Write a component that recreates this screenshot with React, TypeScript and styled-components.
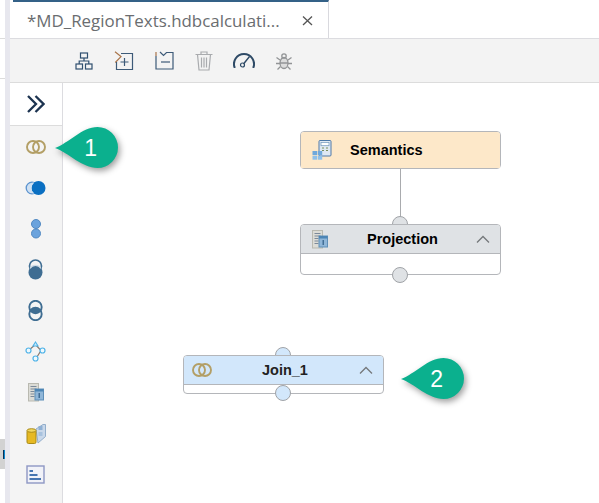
import React from 'react'
import styled, { createGlobalStyle } from 'styled-components'

const GlobalStyle = createGlobalStyle`
  html, body {
    margin: 0;
    padding: 0;
    background: #fff;
    overflow: hidden;
  }
  * {
    box-sizing: border-box;
  }
`

const Page = styled.div`
  display: flex;
  width: 599px;
  height: 503px;
  font-family: 'Liberation Sans', Arial, sans-serif;
`

const Gutter = styled.div`
  width: 5px;
  flex: none;
  display: flex;
  flex-direction: column;
`

const GutterCell = styled.div<{ $h: number }>`
  height: ${({ $h }) => $h}px;
  border-bottom: 1px solid #dcdcdc;
`

const GutterChip = styled.div`
  height: 30px;
  margin-top: 360px;
  background: #d2d2d2;
  display: flex;
  align-items: center;
  justify-content: flex-end;
`

const ChipGlyph = styled.span`
  width: 2px;
  height: 9px;
  background: #0a2f55;
  border-right: 1px solid #0a8ad0;
`

const Rail = styled.div`
  width: 5px;
  flex: none;
  background: #e7e7ee;
`

const Main = styled.div`
  flex: 1;
  display: flex;
  flex-direction: column;
  min-width: 0;
`

const TabBar = styled.div`
  height: 38px;
  flex: none;
  padding-left: 3px;
  display: flex;
  background: #fff;
`

const Tab = styled.div`
  width: 316px;
  border-top: 2px solid #346187;
  border-right: 1px solid #d9d9de;
  display: flex;
  align-items: center;
  padding: 0 15px 0 14px;
  justify-content: space-between;
`

const TabTitle = styled.span`
  font-family: 'Open Sans', sans-serif;
  font-size: 16.9px;
  color: #6a6d70;
  white-space: nowrap;
`

const Toolbar = styled.div`
  height: 45px;
  flex: none;
  background: #f3f3f3;
  border-top: 1px solid #dcdce0;
  border-bottom: 1px solid #dcdcdc;
  padding-left: 54px;
  display: flex;
  align-items: center;
`

const ToolButton = styled.span`
  width: 40px;
  display: flex;
  justify-content: center;
  align-items: center;
`

const Body = styled.div`
  flex: 1;
  display: flex;
  min-height: 0;
`

const Palette = styled.div`
  width: 53px;
  flex: none;
  background: #f4f4f4;
  border-right: 1px solid #dcdce0;
  display: flex;
  flex-direction: column;
`

const PaletteToggle = styled.div`
  height: 43px;
  flex: none;
  background: #fff;
  border-bottom: 1px solid #dcdcdc;
  display: flex;
  align-items: center;
  justify-content: center;
`

const PaletteItem = styled.div`
  height: 41px;
  flex: none;
  display: flex;
  align-items: center;
  justify-content: center;
  padding-right: 1px;
`

const Canvas = styled.div`
  flex: 1;
  position: relative;
  background: #fff;
`

const Node = styled.div<{ $x: number; $y: number; $h: number }>`
  position: absolute;
  left: ${({ $x }) => $x}px;
  top: ${({ $y }) => $y}px;
  width: 201px;
  height: ${({ $h }) => $h}px;
  border: 1px solid #b4b6ba;
  border-radius: 4px;
  background: #fff;
`

const NodeHeader = styled.div<{ $bg: string; $h: number; $rule?: boolean; $pad?: number }>`
  height: ${({ $h }) => $h}px;
  background: ${({ $bg }) => $bg};
  border-radius: 3px 3px 0 0;
  border-bottom: ${({ $rule }) => ($rule ? '1px solid #b4b6ba' : 'none')};
  display: flex;
  align-items: center;
  position: relative;
  padding: 0 10px 0 ${({ $pad }) => $pad ?? 11}px;
`

const NodeLabel = styled.span<{ $left: number; $color?: string }>`
  position: absolute;
  left: ${({ $left }) => $left}px;
  font-size: 14.5px;
  font-weight: 700;
  color: ${({ $color }) => $color ?? '#000'};
`

const Chevron = styled.span`
  margin-left: auto;
  display: flex;
`

const Port = styled.span<{ $x: number; $y: number; $bg: string }>`
  position: absolute;
  left: ${({ $x }) => $x - 8}px;
  top: ${({ $y }) => $y - 8}px;
  width: 16px;
  height: 16px;
  border-radius: 50%;
  border: 1px solid #a0a3a7;
  background: ${({ $bg }) => $bg};
`

const Link = styled.span`
  position: absolute;
  left: 337px;
  top: 86px;
  width: 1px;
  height: 50px;
  background: #a9abae;
`

const CalloutWrap = styled.div<{ $x: number; $y: number; $w: number }>`
  position: absolute;
  left: ${({ $x }) => $x}px;
  top: ${({ $y }) => $y}px;
  width: ${({ $w }) => $w}px;
  height: 41px;
`

const CalloutShape = styled.svg`
  display: block;
  overflow: visible;
  filter: drop-shadow(2px 3px 3px rgba(0, 0, 0, 0.38));
`

const CalloutNumber = styled.span`
  position: absolute;
  right: 21px;
  top: 8px;
  font-size: 23px;
  line-height: 26px;
  color: #fff;
`

const Rings = () => (
  <svg width="20" height="16" viewBox="0 0 20 16" fill="none">
    <circle cx="7" cy="8" r="6" stroke="#b39f66" strokeWidth="1.9" />
    <circle cx="13" cy="8" r="6" stroke="#b39f66" strokeWidth="1.9" />
  </svg>
)

const ProjectionIcon = () => (
  <svg width="16" height="19" viewBox="0 0 16 19">
    <rect x="0.5" y="0.5" width="10" height="17.5" fill="#dcdcd6" stroke="#b9b9b0" />
    <path d="M2.500 3.500h6M2.500 6h6M2.500 8.500h4M2.500 11h4M2.500 13.500h4" stroke="#7c8a9a" strokeWidth="1" />
    <rect x="7" y="6" width="8.500" height="11" fill="#8fb6d8" stroke="#5f8fb8" />
    <rect x="7" y="6" width="8.500" height="2.500" fill="#4c85b5" />
    <path d="M11.200 10v5" stroke="#2f5d85" strokeWidth="1.200" />
  </svg>
)

const SemanticsIcon = () => (
  <svg width="20" height="20" viewBox="0 0 20 20">
    <rect x="7" y="0.5" width="12" height="15.500" rx="1" fill="#dfe8f2" stroke="#4e79a8" />
    <rect x="9" y="2.500" width="8" height="3.200" fill="#fff" stroke="#6f94bb" strokeWidth="0.7" />
    <path d="M10 8h2M14 8h2M10 10.500h2M14 10.500h2" stroke="#7a8f5d" strokeWidth="1" />
    <rect x="0.5" y="11" width="4.500" height="4" fill="#6fa8dc" />
    <rect x="5.700" y="11" width="4.500" height="4" fill="#6fa8dc" />
    <rect x="0.5" y="15.700" width="4.500" height="4" fill="#8fc0ea" />
    <rect x="5.700" y="15.700" width="4.500" height="4" fill="#8fc0ea" />
  </svg>
)

const UpChevron = () => (
  <svg width="14" height="9" viewBox="0 0 14 9" fill="none">
    <path d="M1 7.500 7 1.500l6 6" stroke="#75787b" strokeWidth="1.300" />
  </svg>
)

const toolIcons = [
  <svg key="layout" width="18" height="18" viewBox="0 0 18 18" fill="none" stroke="#2f4f6f" strokeWidth="1.200">
    <rect x="5.500" y="1" width="7" height="5" />
    <rect x="1" y="12" width="6.500" height="5" />
    <rect x="10.500" y="12" width="6.500" height="5" />
    <path d="M9 6v3M4.200 12V9h9.600v3" />
  </svg>,
  <svg key="expand" width="20" height="20" viewBox="0 0 20 20" fill="none" stroke="#3d5a78" strokeWidth="1.200">
    <path d="M1 .7 7 5.600 1.300 11.500" stroke="#a9744a" />
    <path d="M7 2.500h11.500v16H2.500V11" />
    <path d="M10.500 7v8M6.500 11h8" />
  </svg>,
  <svg key="collapse" width="19" height="19" viewBox="0 0 19 19" fill="none" stroke="#3d5a78" strokeWidth="1.200">
    <path d="M1 5v13h17V1.500H11.500L8.500 4.500 5 1" />
    <path d="M6 11h9" />
    <path d="M1 1v4" stroke="#a9744a" />
  </svg>,
  <svg key="trash" width="18" height="20" viewBox="0 0 18 20" fill="none" stroke="#a9abae" strokeWidth="1.200">
    <path d="M.5 3.500h17M6 3.200V1h6v2.200" />
    <path d="M2.500 3.500 4 19h10l1.500-15.500" />
    <path d="M6.500 6.500v10M9 6.500v10M11.500 6.500v10" />
  </svg>,
  <svg key="gauge" width="22" height="15" viewBox="0 0 22 15" fill="none" stroke="#2e4a66" strokeWidth="2">
    <path d="M1.830 15A10 10 0 1 1 20.170 15" />
    <path d="M10.500 11 16.500 4.500" stroke="#f3f3f3" strokeWidth="3.500" />
    <path d="M10.500 11 16.500 3.500" strokeWidth="1.400" />
    <circle cx="9.500" cy="12" r="2" strokeWidth="1.200" />
  </svg>,
  <svg key="bug" width="18" height="18" viewBox="0 0 18 18" fill="none" stroke="#929496" strokeWidth="1.300">
    <ellipse cx="9" cy="11" rx="4" ry="5.500" fill="#dcdcdc" />
    <circle cx="9" cy="4" r="2.200" />
    <path d="M5 8 1.500 5.500M13 8l3.500-2.500M5 11.500H1M13 11.500h4M5.500 14.500l-3 3M12.500 14.500l3 3M5 11h8" />
  </svg>,
]

const paletteIcons = [
  <Rings key="join" />,
  <svg key="nonequi" width="21" height="16" viewBox="0 0 21 16" fill="none">
    <circle cx="7" cy="8" r="5.800" fill="#cfe1f3" stroke="#5b93cf" strokeWidth="1.300" />
    <circle cx="13.500" cy="8" r="7" fill="#0a6fc2" />
    <path d="M8.500 2.500a7 7 0 0 0 0 11" stroke="#cfe1f3" strokeWidth="1.200" />
  </svg>,
  <svg key="union" width="12" height="20" viewBox="0 0 12 20">
    <circle cx="6" cy="5" r="4.500" fill="#6ba3dd" stroke="#5289c2" />
    <circle cx="6" cy="14.500" r="4.500" fill="#6ba3dd" stroke="#5289c2" />
  </svg>,
  <svg key="intersect" width="17" height="21" viewBox="0 0 17 21" fill="none">
    <circle cx="8.500" cy="7" r="6" stroke="#3f6d92" strokeWidth="1.700" />
    <circle cx="8.500" cy="13.500" r="7" fill="#3f6d92" />
    <path d="M3 9.500a6.500 6.500 0 0 1 11 0" stroke="#cfdbe6" strokeWidth="1.200" />
  </svg>,
  <svg key="minus" width="17" height="21" viewBox="0 0 17 21" fill="none">
    <circle cx="8.500" cy="7" r="6.200" stroke="#3f6d92" strokeWidth="1.900" />
    <circle cx="8.500" cy="14" r="6.200" stroke="#3f6d92" strokeWidth="1.900" />
    <path d="M3 10.500a6.500 6.500 0 0 1 11 0 6.500 6.500 0 0 1-11 0Z" fill="#3f6d92" />
  </svg>,
  <svg key="graph" width="21" height="21" viewBox="0 0 21 21" fill="none">
    <path d="M10.500 3.500 16 9.500l-5 8M10.500 3.500 4 9" stroke="#8a7a70" strokeWidth="1.200" />
    <path d="M10.500 1 13 5H8Z" fill="#cfeafa" stroke="#4fb3e8" strokeWidth="1.100" />
    <circle cx="3.500" cy="9.500" r="2.500" fill="#eef8fd" stroke="#4fb3e8" strokeWidth="1.200" />
    <circle cx="17.500" cy="9.500" r="2.500" fill="#eef8fd" stroke="#4fb3e8" strokeWidth="1.200" />
    <circle cx="10.500" cy="17.500" r="2.500" fill="#eef8fd" stroke="#4fb3e8" strokeWidth="1.200" />
  </svg>,
  <ProjectionIcon key="projection" />,
  <svg key="table" width="20" height="21" viewBox="0 0 20 21">
    <path d="M10 6 17 1.500h2.500v12L12 20Z" fill="#c9d8ea" stroke="#93aecb" />
    <rect x="12.500" y="3" width="4" height="4" fill="#8fb0d4" />
    <rect x="12.500" y="9" width="4" height="4" fill="#a8c2de" />
    <rect x="1" y="7" width="9" height="13.500" rx="1.500" fill="#e6b923" stroke="#a98a17" />
    <ellipse cx="5.500" cy="7.500" rx="4.500" ry="1.800" fill="#f2d860" stroke="#a98a17" />
  </svg>,
  <svg key="rank" width="19" height="19" viewBox="0 0 19 19">
    <rect x="1" y="1" width="17" height="17" fill="#f1f2f8" stroke="#8e97c4" strokeWidth="1.400" />
    <path d="M3.500 6h3.500" stroke="#3467a8" strokeWidth="1.800" />
    <path d="M3.500 10h8" stroke="#3467a8" strokeWidth="1.800" />
    <path d="M3.500 14h11.500" stroke="#3467a8" strokeWidth="1.800" />
  </svg>,
]

function Callout({ x, y, value }: { x: number; y: number; value: string }) {
  return (
    <CalloutWrap $x={x} $y={y} $w={63}>
      <CalloutShape width="63" height="41" viewBox="0 0 63 41">
        <path
          d="M0 21C14 16 27 0 42.500 0A20.500 20.500 0 0 1 42.500 41C27 41 14 26 0 21Z"
          fill="#0bb08e"
        />
      </CalloutShape>
      <CalloutNumber>{value}</CalloutNumber>
    </CalloutWrap>
  )
}

export default function App() {
  return (
    <>
      <GlobalStyle />
      <Page>
        <Gutter>
          <GutterCell $h={39} />
          <GutterCell $h={40} />
          <GutterChip>
            <ChipGlyph />
          </GutterChip>
        </Gutter>
        <Rail />
        <Main>
          <TabBar>
            <Tab>
              <TabTitle>*MD_RegionTexts.hdbcalculati...</TabTitle>
              <svg width="11" height="11" viewBox="0 0 11 11" fill="none">
                <path d="M1 1.500 10 10M10 1.500 1 10" stroke="#555" strokeWidth="1.300" />
              </svg>
            </Tab>
          </TabBar>
          <Toolbar>
            {toolIcons.map((icon, i) => (
              <ToolButton key={i}>{icon}</ToolButton>
            ))}
          </Toolbar>
          <Body>
            <Palette>
              <PaletteToggle>
                <svg width="18" height="18" viewBox="0 0 18 18" fill="none">
                  <path d="M1 1 9 9l-8 8M8.500 1l8 8-8 8" stroke="#1c3350" strokeWidth="2.300" />
                </svg>
              </PaletteToggle>
              {paletteIcons.map((icon, i) => (
                <PaletteItem key={i}>{icon}</PaletteItem>
              ))}
            </Palette>
            <Canvas>
              <Link />
              <Port $x={337} $y={141} $bg="#dfe2e5" />
              <Node $x={237} $y={48} $h={38}>
                <NodeHeader $bg="#fde8c9" $h={36}>
                  <SemanticsIcon />
                  <NodeLabel $left={49}>Semantics</NodeLabel>
                </NodeHeader>
              </Node>
              <Node $x={237} $y={141} $h={51}>
                <NodeHeader $bg="#dfe2e5" $h={29} $rule>
                  <ProjectionIcon />
                  <NodeLabel $left={66}>Projection</NodeLabel>
                  <Chevron>
                    <UpChevron />
                  </Chevron>
                </NodeHeader>
              </Node>
              <Port $x={337} $y={192} $bg="#dfe2e5" />
              <Port $x={220} $y={272} $bg="#d2e7fb" />
              <Node $x={120} $y={272} $h={39}>
                <NodeHeader $bg="#d2e7fb" $h={29} $rule $pad={8}>
                  <Rings />
                  <NodeLabel $left={78} $color="#222">Join_1</NodeLabel>
                  <Chevron>
                    <UpChevron />
                  </Chevron>
                </NodeHeader>
              </Node>
              <Port $x={220} $y={310} $bg="#d2e7fb" />
              <Callout x={-8} y={44} value="1" />
              <Callout x={338} y={275} value="2" />
            </Canvas>
          </Body>
        </Main>
      </Page>
    </>
  )
}
